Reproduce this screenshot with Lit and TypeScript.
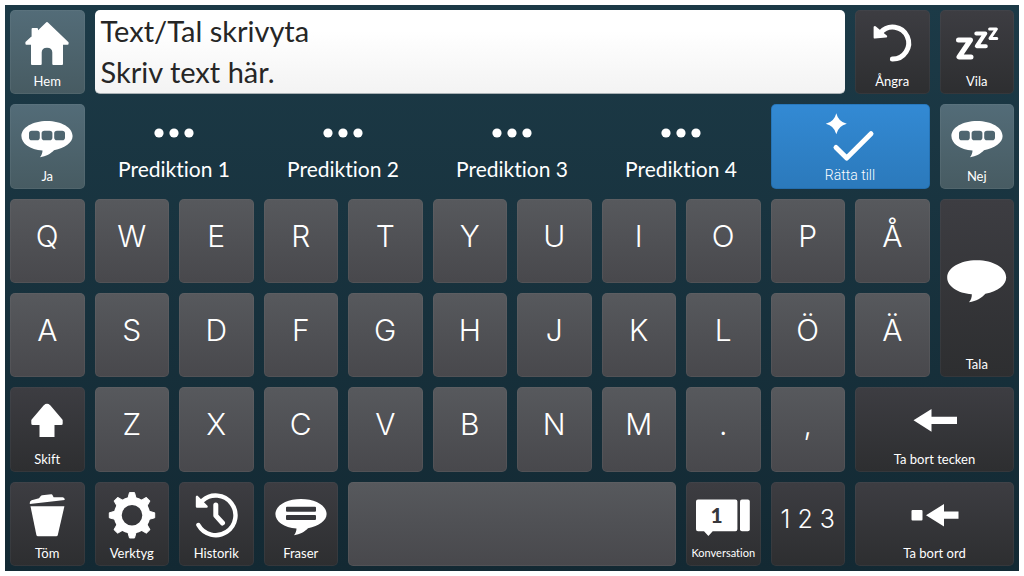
import { LitElement, html, svg, css, nothing } from "lit";
import type { SVGTemplateResult } from "lit";
import { customElement, property, state } from "lit/decorators.js";

const bubble =
  "M32 12C46.5 12 57.6 18.6 57.6 27C57.6 33.6 50 39 39 41.2C36 44.5 31 47.4 25 48.2C26.6 46.4 27.5 44 27.5 41.6C15 40.5 6.4 34.6 6.4 27C6.4 18.6 17.5 12 32 12Z";

const cell = (x: number) =>
  `M${x + 2.8} 21.8h5.2q2.8 0 2.8 2.8v3.8q0 2.8 -2.8 2.8h-5.2q-2.8 0 -2.8 -2.8v-3.8q0 -2.8 2.8 -2.8Z`;

const talk = svg`<path fill-rule="evenodd" d="${bubble} ${cell(14)} ${cell(26.6)} ${cell(39.2)}"/>`;

const icons: Record<string, SVGTemplateResult> = {
  home: svg`<path stroke="currentColor" stroke-width="2" stroke-linejoin="round" d="M32 8L52.6 27.6V28.8H47V49H38.3V37.5C38.3 29.8 25.7 29.8 25.7 37.5V49H17V28.8H11.4V27.6L17.6 21.8V14H22V17.6Z"/>`,
  talk,
  speak: svg`<path d="M31.7 9.2C48.4 9.2 61.2 16.8 61.2 26.4C61.2 33.8 53 40.2 40.4 42.7C36.6 46.8 31.4 50.2 24 51.2C26 48.8 27 46 26.8 43.2C12.4 42 2.2 35.2 2.2 26.4C2.2 16.8 15 9.2 31.7 9.2Z"/>`,
  undo: svg`<path d="M20.5 17.6A16 16 0 1 1 32.4 44" fill="none" stroke="currentColor" stroke-width="5" stroke-linecap="round"/>
    <path d="M14.8 12.2V22.4L26 21.4Z" stroke="currentColor" stroke-width="2.4" stroke-linejoin="round"/>`,
  rest: svg`<g fill="none" stroke="currentColor" stroke-linejoin="round" stroke-linecap="round">
    <path stroke-width="5" d="M13.5 25H25.5L14 42H26"/>
    <path stroke-width="4" d="M31.3 18.4H40.3L31.8 31.2H40.8"/>
    <path stroke-width="3" d="M44.6 14H51.4L45 23.4H51.8"/></g>`,
  correct: svg`<path d="M18.3 4.2Q20.3 12.7 28.8 14.7Q20.3 16.7 18.3 25.2Q16.3 16.7 7.8 14.7Q16.3 12.7 18.3 4.2Z"/>
    <path d="M18 38.5L28.7 49L53 24.7" fill="none" stroke="currentColor" stroke-width="5" stroke-linecap="round" stroke-linejoin="round"/>`,
  shift: svg`<path stroke="currentColor" stroke-width="3" stroke-linejoin="round" d="M29.9 14.3Q32 12.2 34.1 14.3L46.2 28.4V31.4H17.8V28.4Z"/><path d="M24.5 30h15v15h-15z"/>`,
  back: svg`<path d="M10.5 28.3L28.5 17V24.7H54V32H28.5V39.7Z"/>`,
  backWord: svg`<rect x="8.5" y="23" width="11" height="10.6" rx="1"/><path d="M23 28.3L41 17V24.6H55.5V31.8H41V39.6Z"/>`,
  clear: svg`<path d="M15.5 19.3H49.4L42.8 48Q42.5 49.3 41.2 49.3H23Q21.7 49.3 21.4 48Z"/>
    <path d="M14.8 15.8Q14.9 13.8 16.6 13.2L24 11.2L25.8 9Q26.3 8.4 27.2 8.3L36.2 7.3Q37.2 7.2 37.6 8.2L38.6 10.2L47.6 10.3Q49.8 10.5 49.8 13L14.8 17Z"/>`,
  gear: svg`<circle cx="32" cy="28.3" r="14.3" fill="none" stroke="currentColor" stroke-width="8"/>
    ${[0, 45, 90, 135, 180, 225, 270, 315].map(
      (a) => svg`<path transform="rotate(${a} 32 28.3)" stroke="currentColor" stroke-linejoin="round" d="M29.5 5.6H34.5L36.2 11.8H27.8Z"/>`
    )}`,
  history: svg`<g fill="none" stroke="currentColor" stroke-linecap="round" stroke-linejoin="round">
    <path stroke-width="4.4" d="M18.5 13.6A19.8 19.8 0 1 1 14.4 38"/>
    <path stroke-width="5" d="M31.8 18V28.6L38.5 36"/></g>
    <path d="M13 9.8V19.6H22.6Z" stroke="currentColor" stroke-width="2.4" stroke-linejoin="round"/>`,
  phrases: svg`<path fill-rule="evenodd" d="${bubble} M18 19.8H46Q47 19.8 47 20.8V23.8Q47 24.8 46 24.8H18Q17 24.8 17 23.8V20.8Q17 19.8 18 19.8Z M18 28H46Q47 28 47 29V32Q47 33 46 33H18Q17 33 17 32V29Q17 28 18 28Z"/>`,
  conversation: svg`<path d="M7 12.6H44.4Q46.4 12.6 46.4 14.6V42.3Q46.4 44.3 44.4 44.3H21.7L17.4 49L13 44.3H7Q5 44.3 5 42.3V14.6Q5 12.6 7 12.6Z"/>
    <rect x="49" y="12.6" width="9.8" height="31.7" rx="2"/>
    <text class="num" x="25.7" y="35.6" text-anchor="middle">1</text>`,
  dots: svg`<circle cx="17" cy="28" r="4.6"/><circle cx="32" cy="28" r="4.6"/><circle cx="47" cy="28" r="4.6"/>`,
};

interface KeySpec {
  label: string;
  kind: string;
  icon?: string;
  size?: string;
}

const letters = (text: string): KeySpec[] => [...text].map((label) => ({ label, kind: "letter" }));

const keys: KeySpec[] = [
  { label: "Ja", kind: "teal", icon: "talk" },
  ...[1, 2, 3, 4].map((n) => ({ label: `Prediktion ${n}`, kind: "prediction", icon: "dots", size: "w2" })),
  { label: "Rätta till", kind: "blue", icon: "correct", size: "w2" },
  { label: "Nej", kind: "teal", icon: "talk" },
  ...letters("QWERTYUIOPÅ"),
  { label: "Tala", kind: "dark", icon: "speak", size: "h2" },
  ...letters("ASDFGHJKLÖÄ"),
  { label: "Skift", kind: "dark", icon: "shift" },
  ...letters("ZXCVBNM.,"),
  { label: "Ta bort tecken", kind: "dark", icon: "back", size: "w2" },
  { label: "Töm", kind: "dark", icon: "clear" },
  { label: "Verktyg", kind: "dark", icon: "gear" },
  { label: "Historik", kind: "dark", icon: "history" },
  { label: "Fraser", kind: "dark", icon: "phrases" },
  { label: " ", kind: "letter", size: "w4" },
  { label: "Konversation", kind: "dark small", icon: "conversation" },
  { label: "1 2 3", kind: "dark digits" },
  { label: "Ta bort ord", kind: "dark", icon: "backWord", size: "w2" },
];

@customElement("board-key")
export class BoardKey extends LitElement {
  @property() label = "";
  @property() kind = "dark";
  @property() icon = "";

  static styles = css`
    :host { display: grid; min-width: 0; min-height: 0; }
    button {
      display: flex; flex-direction: column; align-items: center; justify-content: center;
      min-width: 0; min-height: 0; margin: 0; padding: 3px 0;
      border: 1px solid transparent; border-radius: 5px;
      background: none; color: #fff; cursor: pointer;
      font: 400 13px/18px Lato, "Liberation Sans", sans-serif; white-space: nowrap;
      font-variant-ligatures: none;
      background-origin: border-box;
    }
    .dark { background-image: linear-gradient(#3d3d42, #2d2e30); border-color: rgba(80, 90, 100, 0.22); }
    .letter { background-image: linear-gradient(#57595d, #48484c); border-color: rgba(110, 110, 115, 0.25); }
    .teal { background-image: linear-gradient(#536c78, #475b62); border-color: rgba(110, 130, 140, 0.25); }
    .blue {
      background-image: linear-gradient(#338ad4, #2b79bb); border-color: rgba(20, 90, 150, 0.35);
      font-family: Roboto, sans-serif; font-weight: 300; font-size: 14px; padding: 3px 0 4px;
    }
    .letter, .digits { font-family: Inter, sans-serif; font-weight: 300; font-size: 30px; line-height: 36px; padding: 0 0 10px; }
    .digits { font-size: 25px; }
    .prediction { font-size: 21px; line-height: 26px; padding: 5px 0 6px; }
    .small { font-size: 11px; }
    .picture { flex: 1; min-height: 0; display: flex; align-items: center; }
    svg { width: 64px; height: 56px; fill: currentColor; overflow: visible; }
    .num { fill: #37373b; font: 900 21px Lato, sans-serif; }
  `;

  render() {
    return html`<button type="button" class=${this.kind} aria-label=${this.label.trim() || "Mellanslag"}>
      ${this.icon
        ? html`<span class="picture"><svg viewBox="0 0 64 56" aria-hidden="true">${icons[this.icon]}</svg></span>`
        : nothing}
      <span>${this.label}</span>
    </button>`;
  }
}

@customElement("app-root")
export class AppRoot extends LitElement {
  @state() private text = "Text/Tal skrivyta\nSkriv text här.";

  static styles = css`
    :host { display: block; box-sizing: border-box; height: 100vh; padding: 5px; background: #fff; }
    .board {
      box-sizing: border-box; height: 100%; padding: 5px;
      display: grid; gap: 10px;
      grid-template-columns: repeat(12, minmax(0, 1fr));
      grid-template-rows: repeat(6, minmax(0, 1fr));
      background: linear-gradient(#1c3a47, #132933);
    }
    .w2 { grid-column: span 2; }
    .w4 { grid-column: span 4; }
    .h2 { grid-row: span 2; }
    .field { grid-column: span 9; display: grid; min-height: 0; }
    textarea {
      box-sizing: border-box; width: 100%; min-height: 0; margin: 0; padding: 0 6px;
      border: 0; border-bottom: 1px solid #a9b1b5; border-radius: 5px; outline: none;
      resize: none; overflow: hidden;
      background: linear-gradient(#fff 25%, #f3f3f3); color: #262626;
      font: 400 29px/41px Lato, "Liberation Sans", sans-serif;
    }
  `;

  private key(k: KeySpec) {
    return html`<board-key class=${k.size ?? "w1"} .label=${k.label} .kind=${k.kind} .icon=${k.icon ?? ""}></board-key>`;
  }

  render() {
    return html`<main class="board">
      ${this.key({ label: "Hem", kind: "teal", icon: "home" })}
      <label class="field">
        <textarea aria-label="Skrivyta" spellcheck="false" .value=${this.text}
          @input=${(e: Event) => (this.text = (e.target as HTMLTextAreaElement).value)}></textarea>
      </label>
      ${this.key({ label: "Ångra", kind: "dark", icon: "undo" })}
      ${this.key({ label: "Vila", kind: "dark", icon: "rest" })}
      ${keys.map((k) => this.key(k))}
    </main>`;
  }
}
